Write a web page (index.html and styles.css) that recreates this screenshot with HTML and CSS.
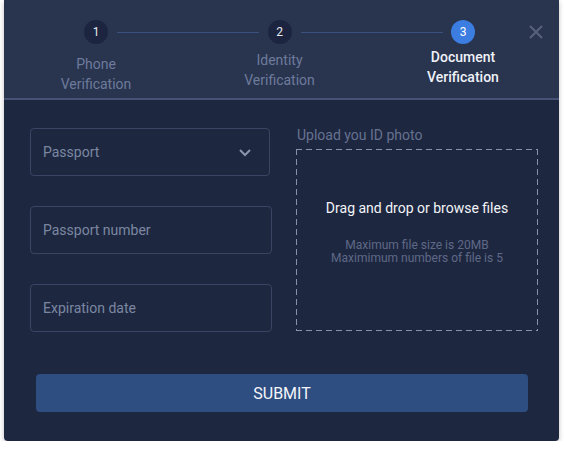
FILE: index.html
```html
<!DOCTYPE html>
<html>
<head>
<meta charset="utf-8">
<link rel="stylesheet" href="styles.css">
</head>
<body>
<div class="card">
  <div class="header">
    <div class="steps">
      <div class="step step-1 done">
        <div class="circle">1</div>
        <div class="label">Phone<br>Verification</div>
      </div>
      <div class="step step-2 done">
        <div class="circle">2</div>
        <div class="label">Identity<br>Verification</div>
      </div>
      <div class="step step-3 active">
        <div class="circle">3</div>
        <div class="label">Document<br>Verification</div>
      </div>
    </div>
    <button class="close" aria-label="Close">
      <svg width="14" height="14" viewBox="0 0 14 14"><path d="M1 1L13 13M13 1L1 13" stroke="#58627c" stroke-width="2" fill="none"/></svg>
    </button>
  </div>
  <div class="body">
    <div class="form">
      <div class="fields">
        <div class="field select">
          <span class="ph">Passport</span>
          <svg width="14" height="9" viewBox="0 0 14 9"><path d="M2 2L7 7L12 2" stroke="#8a94ab" stroke-width="2" fill="none"/></svg>
        </div>
        <div class="field wide"><span class="ph">Passport number</span></div>
        <div class="field wide"><span class="ph">Expiration date</span></div>
      </div>
      <div class="upload">
        <div class="upload-label">Upload you ID photo</div>
        <div class="drop">
          <div class="drop-title">Drag and drop or browse files</div>
          <div class="drop-note">Maximum file size is 20MB<br>Maximimum numbers of file is 5</div>
        </div>
      </div>
    </div>
    <button class="submit">SUBMIT</button>
  </div>
</div>
</body>
</html>
```
FILE: styles.css
```css
* { box-sizing: border-box; }
html, body { margin: 0; padding: 0; background: #ffffff; }
body { font-family: Roboto, "Liberation Sans", sans-serif; }

.card {
  margin-left: 4px;
  width: 555px;
  height: 441px;
  background: #1e2740;
  border-radius: 0 0 4px 4px;
  box-shadow: 0 2px 5px rgba(0,0,0,0.25);
  overflow: hidden;
}

.header {
  position: relative;
  height: 100px;
  background: #29344f;
  border-bottom: 2px solid #465375;
}

.steps {
  display: flex;
  padding-top: 20px;
}

.step {
  position: relative;
  width: 184px;
  display: flex;
  flex-direction: column;
  align-items: center;
}

.step-2 { width: 183px; }

.circle {
  width: 24px;
  height: 24px;
  border-radius: 50%;
  background: #1c2440;
  color: #e6e9f0;
  font-size: 12px;
  line-height: 24px;
  text-align: center;
}

.step-1::after,
.step-2::after {
  content: "";
  position: absolute;
  top: 12px;
  left: 113px;
  width: 142px;
  height: 1px;
  background: #3a5081;
}

.label {
  font-size: 14px;
  line-height: 20px;
  text-align: center;
  color: #6d7b9c;
}

.step-1 .label { margin-top: 10px; }
.step-2 .label { margin-top: 6px; }
.step-3 .label { margin-top: 3px; color: #eef1f7; font-weight: 500; }

.active .circle { background: #3b7de0; color: #ffffff; }

.close {
  position: absolute;
  top: 25px;
  right: 16px;
  width: 14px;
  height: 14px;
  padding: 0;
  border: none;
  background: none;
  display: flex;
}

.body {
  padding: 28px 21px 0 26px;
}

.form {
  display: flex;
  gap: 24px;
}

.fields {
  flex: 0 0 242px;
  display: flex;
  flex-direction: column;
  gap: 30px;
}

.field {
  height: 48px;
  border: 1px solid #3a4563;
  border-radius: 4px;
  display: flex;
  align-items: center;
  justify-content: space-between;
  padding: 0 17px 0 12px;
}

.field.select { width: 240px; }

.ph {
  font-size: 14px;
  color: #7b87a2;
}

.upload {
  flex: 0 0 242px;
}

.upload-label {
  font-size: 14px;
  line-height: 16px;
  color: #667290;
  margin-top: -1px;
  margin-left: 1px;
}

.drop {
  margin-top: 6px;
  height: 182px;
  background-image:
    repeating-linear-gradient(90deg, #8891a7 0 6px, transparent 6px 10px),
    repeating-linear-gradient(90deg, #8891a7 0 6px, transparent 6px 10px),
    repeating-linear-gradient(180deg, #8891a7 0 6px, transparent 6px 10px),
    repeating-linear-gradient(180deg, #8891a7 0 6px, transparent 6px 10px);
  background-size: 100% 1px, 100% 1px, 1px 100%, 1px 100%;
  background-position: left top, left bottom, left top, right top;
  background-repeat: no-repeat;
  display: flex;
  flex-direction: column;
  align-items: center;
  padding-top: 50px;
}

.drop-title {
  font-size: 14px;
  line-height: 18px;
  color: #f2f4f8;
}

.drop-note {
  margin-top: 22px;
  font-size: 12px;
  line-height: 12.5px;
  text-align: center;
  color: #5e6987;
}

.submit {
  display: block;
  margin: 42px 0 0 6px;
  width: 492px;
  height: 38px;
  border: none;
  border-radius: 4px;
  background: #2e4d80;
  color: #f4f6fa;
  font-family: Roboto, "Liberation Sans", sans-serif;
  font-size: 16px;
}
```
